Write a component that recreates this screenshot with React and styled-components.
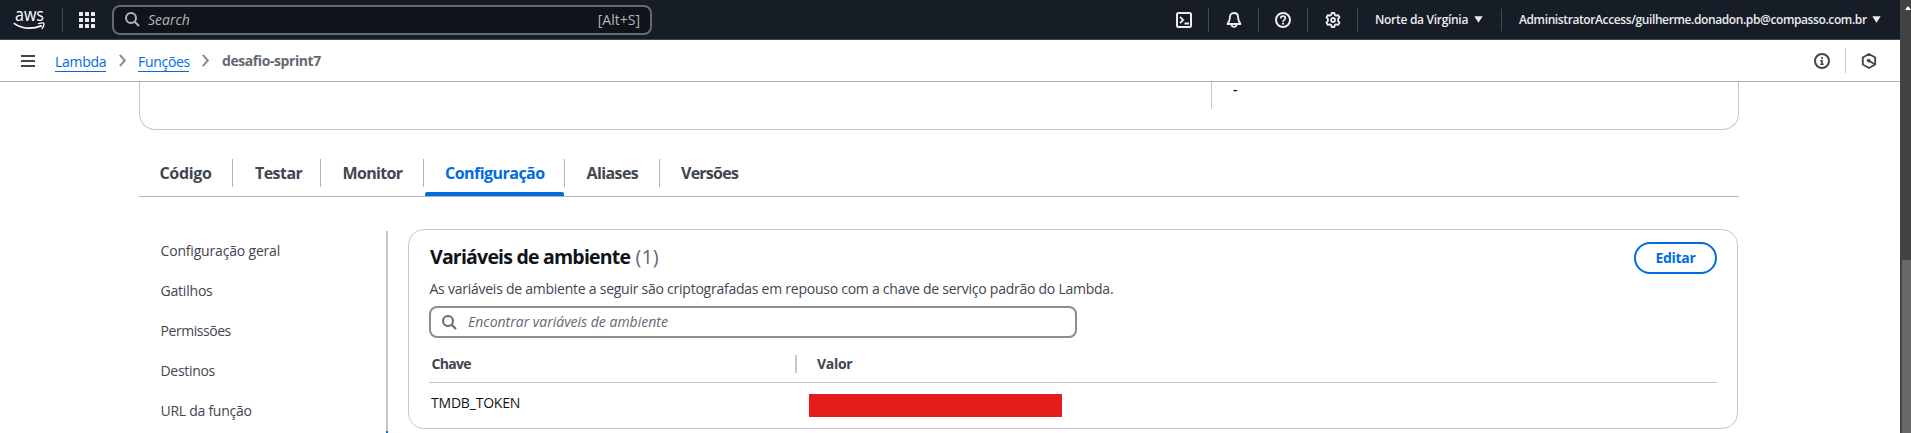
import React from "react";
import styled, { createGlobalStyle } from "styled-components";

const GlobalStyle = createGlobalStyle`
  * { box-sizing: border-box; }
  body {
    margin: 0;
    overflow: hidden;
    background: #fff;
    color: #0f141a;
    font-family: "Open Sans", "Noto Sans", sans-serif;
    font-size: 14px;
    line-height: 20px;
    white-space: nowrap;
  }
`;

const Window = styled.div`
  display: flex;
  width: 1911px;
  height: 433px;
  overflow: hidden;
`;
const Page = styled.div`
  width: 1900px;
  height: 433px;
  overflow: hidden;
`;

const Scrollbar = styled.div`
  display: flex;
  flex-direction: column;
  justify-content: space-between;
  width: 11px;
  background: #424242;
  padding: 6px 0 0 2px;
  svg { display: block; margin-left: 3px; }
`;
const Thumb = styled.div`
  height: 173px;
  background: #686868;
`;

const TopBar = styled.header`
  display: flex;
  align-items: center;
  height: 40px;
  background: #161d26;
  border-bottom: 1px solid #424650;
  color: #ebebf0;
`;
const LogoCell = styled.div`
  width: 63px;
  height: 24px;
  padding-left: 14px;
  border-right: 1px solid #424650;
  svg { display: block; overflow: visible; }
`;
const AppsCell = styled.div`
  width: 49px;
  padding-left: 16px;
  svg { display: block; }
`;
const SearchBox = styled.div`
  display: flex;
  align-items: center;
  width: ${(p) => p.$width}px;
  height: ${(p) => p.$height}px;
  padding: 0 10px 0 11px;
  border: 2px solid ${(p) => (p.$dark ? "#656871" : "#8c8c94")};
  border-radius: 8px;
  background: ${(p) => (p.$dark ? "#0f141a" : "#fff")};
  color: ${(p) => (p.$dark ? "#b4b4bb" : "#656871")};
  svg { margin-right: ${(p) => (p.$dark ? 8 : 11)}px; }
`;
const Placeholder = styled.span`
  flex: 1;
  font-style: italic;
`;
const Utilities = styled.div`
  display: flex;
  align-items: center;
  margin-left: auto;
`;
const Utility = styled.div`
  display: flex;
  align-items: center;
  justify-content: ${(p) => (p.$menu ? "flex-start" : "center")};
  width: ${(p) => p.$width}px;
  height: ${(p) => (p.$menu ? 22 : 24)}px;
  padding-left: ${(p) => (p.$menu ? 17 : 0)}px;
  border-right: ${(p) => (p.$last ? "0" : "1px solid #424650")};
  font-size: 12px;
  font-weight: 600;
  letter-spacing: ${(p) => p.$spacing || 0}px;
`;
const MenuLabel = styled.span`
  width: ${(p) => p.$width}px;
`;

const CrumbBar = styled.nav`
  display: flex;
  align-items: center;
  height: 42px;
  padding: 0 23px 0 21px;
  border-bottom: 1px solid #b4b4bb;
  svg { display: block; }
`;
const Crumb = styled.a`
  width: 51px;
  margin-left: ${(p) => p.$gap}px;
  color: #006ce0;
  letter-spacing: -0.3px;
  line-height: 19px;
  margin-top: 2px;
  border-bottom: 1px solid #006ce0;
`;
const CrumbArrow = styled.svg`
  margin: 0 12px 0 13px;
`;
const CurrentCrumb = styled.span`
  margin-left: 1px;
  color: #656871;
  font-weight: 700;
  letter-spacing: -0.42px;
`;
const CrumbTools = styled.div`
  display: flex;
  align-items: center;
  margin-left: auto;
  color: #424650;
`;
const ToolDivider = styled.div`
  width: 1px;
  height: 25px;
  margin: 0 15px;
  background: #c6c6cd;
`;

const Content = styled.main`
  width: 1600px;
  margin-left: 139px;
`;
const SummaryCard = styled.section`
  display: flex;
  height: 48px;
  padding-left: 1071px;
  border: 1px solid #c6c6cd;
  border-top: 0;
  border-radius: 0 0 16px 16px;
`;
const SummaryColumn = styled.div`
  height: 27px;
  padding-left: 21px;
  border-left: 1px solid #c6c6cd;
  line-height: 14px;
  font-weight: 600;
`;

const Tabs = styled.div`
  display: flex;
  height: 38px;
  margin-top: 29px;
  border-bottom: 1px solid #b4b4bb;
`;
const Tab = styled.div`
  display: flex;
  flex-direction: column;
  justify-content: space-between;
  width: ${(p) => p.$width}px;
`;
const TabLabel = styled.span`
  height: 28px;
  padding-left: ${(p) => p.$indent}px;
  border-right: ${(p) => (p.$last ? "0" : "1px solid #b4b4bb")};
  color: ${(p) => (p.$active ? "#006ce0" : "#424650")};
  font-size: 16px;
  font-weight: 700;
  line-height: 28px;
  letter-spacing: ${(p) => p.$spacing}px;
`;
const TabMarker = styled.div`
  height: 4px;
  margin: 0 1px;
  border-radius: 2px 2px 0 0;
  background: #006ce0;
`;

const Body = styled.div`
  display: flex;
  align-items: flex-start;
`;
const SideNav = styled.nav`
  width: 249px;
  margin-top: 34px;
`;
const SideItem = styled.div`
  height: 40px;
  padding-left: 21.500px;
  border-right: 2px solid ${(p) => (p.$active ? "#006ce0" : "#c6c6cd")};
  color: #424650;
  line-height: 40px;
  letter-spacing: ${(p) => p.$spacing}px;
`;

const Panel = styled.section`
  width: 1330px;
  height: 200px;
  margin: 32px 0 0 20px;
  padding: 12px 20px 0;
  border: 1px solid #c6c6cd;
  border-radius: 16px;
`;
const PanelHeader = styled.div`
  display: flex;
  justify-content: space-between;
  align-items: flex-start;
  height: 32px;
`;
const Title = styled.h2`
  margin: 0 0 0 1px;
  font-size: 19.5px;
  font-weight: 700;
  line-height: 29px;
  letter-spacing: -0.79px;
`;
const Count = styled.span`
  margin-left: 1px;
  color: #656871;
  font-size: 20px;
  font-weight: 400;
  letter-spacing: 0;
`;
const EditButton = styled.button`
  width: 83px;
  height: 32px;
  padding: 0;
  border: 2px solid #006ce0;
  border-radius: 20px;
  background: #fff;
  color: #006ce0;
  font: 700 14px/20px "Open Sans", sans-serif;
  letter-spacing: -0.3px;
`;
const Description = styled.p`
  margin: 5px 0 7px 0.5px;
  color: #424650;
  letter-spacing: -0.248px;
`;
const TableHead = styled.div`
  display: flex;
  align-items: center;
  height: 38px;
  margin-top: 7px;
  border-bottom: 1px solid #c6c6cd;
  color: #424650;
  font-weight: 700;
  letter-spacing: -0.7px;
`;
const KeyHead = styled.div`
  width: 368px;
  height: 18px;
  padding-left: 2.500px;
  border-right: 2px solid #c6c6cd;
  line-height: 18px;
`;
const ValueHead = styled.div`
  padding-left: 20px;
  letter-spacing: -0.3px;
`;
const TableRow = styled.div`
  display: flex;
  height: 45px;
`;
const KeyCell = styled.div`
  width: 380px;
  padding-left: 2px;
  line-height: 39px;
  letter-spacing: -0.2px;
`;
const Redaction = styled.div`
  width: 253px;
  height: 23px;
  margin-top: 11px;
  background: #e61c1c;
`;

const AwsLogo = () => (
  <svg width="32" height="24" viewBox="0 0 32 24" fill="#fff">
    <text x="1" y="12.8" fontFamily="Open Sans, sans-serif" fontSize="17.500" fontWeight="500" textLength="29" lengthAdjust="spacingAndGlyphs">aws</text>
    <path d="M.4 15.6c4.300 3 9.500 4.600 15 4.600 4 0 8-.8 11.700-2.300" fill="none" stroke="#fff" strokeWidth="1.700" strokeLinecap="round" />
    <path d="M24.600 15.600c2.400-.8 4.700-.9 5.200-.3.500.7-.2 3.300-1.700 5.100" fill="none" stroke="#fff" strokeWidth="1.400" strokeLinecap="round" />
  </svg>
);
const AppsIcon = () => (
  <svg width="16" height="16" fill="#ebebf0">
    {[0, 6, 12].map((y) => [0, 6, 12].map((x) => <rect key={x + "-" + y} x={x} y={y} width="4" height="4" rx=".5" />))}
  </svg>
);
const SearchIcon = () => (
  <svg width="15" height="15" fill="none" stroke="currentColor" strokeWidth="2">
    <circle cx="6" cy="6" r="5" />
    <path d="m9.700 9.700 4.300 4.300" />
  </svg>
);
const Line = ({ children }) => (
  <svg width="16" height="16" viewBox="0 0 16 16" fill="none" stroke="currentColor" strokeWidth="2" strokeLinejoin="round">
    {children}
  </svg>
);
const ShellIcon = () => (
  <Line>
    <rect x="1" y="1" width="14" height="14" rx="1.500" />
    <path d="m4 4.800 3.200 3.200L4 11.200M8.500 11.500H13" strokeWidth="1.800" strokeLinejoin="miter" />
  </Line>
);
const BellIcon = () => (
  <Line>
    <path d="M8 1C5.200 1 3.900 3 3.900 5.400c0 3-.9 4.500-2.400 6.600h13c-1.500-2.100-2.400-3.600-2.400-6.600C12.100 3 10.800 1 8 1z" strokeWidth="1.900" />
    <path d="M5.500 12.500c.2 1.600 1.200 2.400 2.500 2.400s2.300-.8 2.500-2.400" strokeWidth="1.900" />
  </Line>
);
const HelpIcon = () => (
  <Line>
    <circle cx="8" cy="8" r="7" />
    <path d="M5.700 6.400C5.700 5 6.700 4.200 8 4.200s2.300.8 2.300 2c0 1.600-2.300 1.700-2.300 3.500" strokeWidth="1.700" />
    <path d="M8 10.700v1.800" />
  </Line>
);
const GearIcon = () => (
  <Line>
    <path d="M6.700 1h2.600l.5 1.900 1.300.7 1.900-.6 1.500 2.300L13.100 6.900v2.200l1.400 1.600-1.500 2.300-1.900-.6-1.300.7-.5 1.900H6.700l-.5-1.900-1.300-.7-1.900.6-1.500-2.300 1.400-1.600V6.900L1.500 5.300 3 3l1.900.6 1.300-.7z" strokeWidth="1.800" />
    <circle cx="8" cy="8" r="2" strokeWidth="1.800" />
  </Line>
);
const Caret = () => (
  <svg width="9" height="7" fill="#ebebf0"><path d="M.3.300h8.400L4.500 6.800z" /></svg>
);
const MenuIcon = () => (
  <svg width="14" height="12" fill="#424650">
    <rect width="14" height="2" /><rect y="5" width="14" height="2" /><rect y="10" width="14" height="2" />
  </svg>
);
const Arrow = () => (
  <CrumbArrow width="7" height="13" fill="none" stroke="#8c8c94" strokeWidth="2"><path d="m.8.800 5 5.700-5 5.700" /></CrumbArrow>
);
const InfoIcon = () => (
  <Line>
    <circle cx="8" cy="8" r="7" />
    <path d="M8 4v2M6.300 7.900H8V12M6.300 11.300h3.400" strokeWidth="1.600" strokeLinejoin="miter" />
  </Line>
);
const HexIcon = () => (
  <Line>
    <path d="m8 1 6.200 3.500v7L8 15l-6.200-3.500v-7z" strokeWidth="1.900" />
    <circle cx="7.700" cy="7.600" r="1.900" fill="currentColor" stroke="none" />
    <path d="m7.700 7.600 5.800 3.600" strokeWidth="1.800" />
  </Line>
);

const tabs = [
  { label: "Código", width: 94, indent: 20.5, spacing: -0.35 },
  { label: "Testar", width: 88, indent: 22, spacing: -0.55 },
  { label: "Monitor", width: 103, indent: 21.5, spacing: -0.65 },
  { label: "Configuração", width: 141, indent: 21, spacing: -0.53, active: true },
  { label: "Aliases", width: 95, indent: 21.5, spacing: -0.6 },
  { label: "Versões", width: 90, indent: 21, spacing: -0.75, last: true },
];
const sections = [
  ["Configuração geral", -0.18],
  ["Gatilhos", -0.2],
  ["Permissões", -0.45],
  ["Destinos", -0.3],
  ["URL da função", -0.27],
];

export default function App() {
  return (
    <Window>
      <GlobalStyle />
      <Page>
        <TopBar>
          <LogoCell><AwsLogo /></LogoCell>
          <AppsCell><AppsIcon /></AppsCell>
          <SearchBox $dark $width={540} $height={30}>
            <SearchIcon />
            <Placeholder>Search</Placeholder>
            <span>[Alt+S]</span>
          </SearchBox>
          <Utilities>
            <Utility $width={49}><ShellIcon /></Utility>
            <Utility $width={50}><BellIcon /></Utility>
            <Utility $width={49}><HelpIcon /></Utility>
            <Utility $width={50}><GearIcon /></Utility>
            <Utility $menu $width={144} $spacing={-0.3}>
              <MenuLabel $width={99}>Norte da Virgínia</MenuLabel>
              <Caret />
            </Utility>
            <Utility $menu $last $width={398} $spacing={-0.39}>
              <MenuLabel $width={353}>AdministratorAccess/guilherme.donadon.pb@compasso.com.br</MenuLabel>
              <Caret />
            </Utility>
          </Utilities>
        </TopBar>
        <CrumbBar>
          <MenuIcon />
          <Crumb $gap={20}>Lambda</Crumb>
          <Arrow />
          <Crumb $gap={0}>Funções</Crumb>
          <Arrow />
          <CurrentCrumb>desafio-sprint7</CurrentCrumb>
          <CrumbTools>
            <InfoIcon />
            <ToolDivider />
            <HexIcon />
          </CrumbTools>
        </CrumbBar>
        <Content>
          <SummaryCard><SummaryColumn>-</SummaryColumn></SummaryCard>
          <Tabs>
            {tabs.map((t) => (
              <Tab key={t.label} $width={t.width}>
                <TabLabel $indent={t.indent} $spacing={t.spacing} $active={t.active} $last={t.last}>{t.label}</TabLabel>
                {t.active && <TabMarker />}
              </Tab>
            ))}
          </Tabs>
          <Body>
            <SideNav>
              {sections.map(([label, spacing]) => <SideItem key={label} $spacing={spacing}>{label}</SideItem>)}
              <SideItem $active />
            </SideNav>
            <Panel>
              <PanelHeader>
                <Title>Variáveis de ambiente <Count>(1)</Count></Title>
                <EditButton>Editar</EditButton>
              </PanelHeader>
              <Description>As variáveis de ambiente a seguir são criptografadas em repouso com a chave de serviço padrão do Lambda.</Description>
              <SearchBox $width={648} $height={32}>
                <SearchIcon />
                <Placeholder>Encontrar variáveis de ambiente</Placeholder>
              </SearchBox>
              <TableHead>
                <KeyHead>Chave</KeyHead>
                <ValueHead>Valor</ValueHead>
              </TableHead>
              <TableRow>
                <KeyCell>TMDB_TOKEN</KeyCell>
                <Redaction />
              </TableRow>
            </Panel>
          </Body>
        </Content>
      </Page>
      <Scrollbar>
        <svg width="6" height="4" fill="#fff"><path d="M3 0 6 4H0z" /></svg>
        <Thumb />
      </Scrollbar>
    </Window>
  );
}
